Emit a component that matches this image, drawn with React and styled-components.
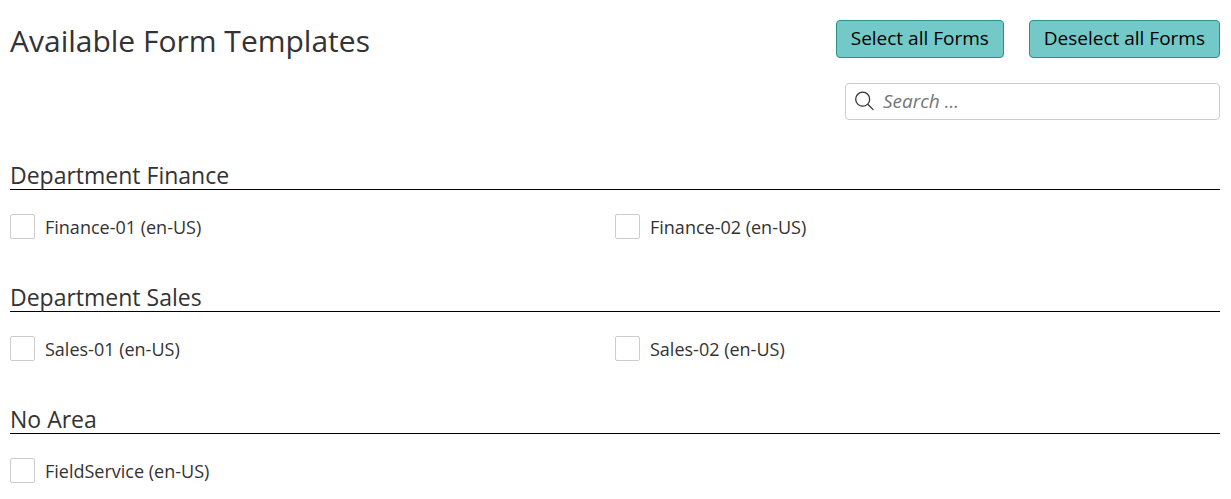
import React, { useState } from "react";
import styled, { createGlobalStyle } from "styled-components";

const GlobalStyle = createGlobalStyle`
  *, *::before, *::after { box-sizing: border-box; }
  body {
    margin: 0;
    background: #fff;
    color: #333;
    font-family: "Open Sans", "Noto Sans", sans-serif;
    font-size: 18px;
  }
`;

const Page = styled.main`
  padding: 20px 11px 16px 10px;
`;

const Header = styled.header`
  display: flex;
  justify-content: space-between;
  align-items: flex-start;
`;

const Title = styled.h1`
  margin: 0;
  font-size: 30px;
  font-weight: 400;
  line-height: 42px;
`;

const Actions = styled.div`
  display: flex;
  gap: 25px;
`;

const ActionButton = styled.button`
  height: 38px;
  padding: 0 14px 2px;
  border: 1px solid #2a9090;
  border-radius: 4px;
  background: #73c8c8;
  color: #000;
  font-family: inherit;
  font-size: 19px;
  line-height: 24px;
  cursor: pointer;
`;

const SearchRow = styled.div`
  display: flex;
  justify-content: flex-end;
  margin-top: 21px;
`;

const SearchBox = styled.label`
  display: flex;
  align-items: center;
  gap: 9px;
  width: 31%;
  height: 37px;
  padding: 0 9px 2px;
  border: 1px solid #ccc;
  border-radius: 4px;
`;

const SearchInput = styled.input`
  flex: 1;
  min-width: 0;
  padding: 0;
  border: 0;
  outline: 0;
  background: transparent;
  font-family: inherit;
  font-size: 19px;
  &::placeholder {
    color: #757575;
    font-style: italic;
    opacity: 1;
  }
`;

const Section = styled.section`
  margin-top: 42px;
`;

const SectionTitle = styled.h2`
  margin: 0 0 24px;
  border-bottom: 1px solid #000;
  font-size: 23px;
  font-weight: 400;
  line-height: 27px;
`;

const FormGrid = styled.div`
  display: grid;
  grid-template-columns: 1fr 1fr;
  padding-bottom: 2px;
`;

const Option = styled.label`
  display: flex;
  align-items: flex-start;
  gap: 10px;
  line-height: 26px;
`;

const Checkbox = styled.input`
  appearance: none;
  flex: none;
  width: 25px;
  height: 25px;
  margin: 0;
  border: 1px solid #ccc;
  border-radius: 2px;
  background: #fff;
  &:checked {
    background: #73c8c8;
  }
`;

const areas = [
  { name: "Department Finance", forms: ["Finance-01 (en-US)", "Finance-02 (en-US)"] },
  { name: "Department Sales", forms: ["Sales-01 (en-US)", "Sales-02 (en-US)"] },
  { name: "No Area", forms: ["FieldService (en-US)"] },
];

const allForms = areas.flatMap((area) => area.forms);

function SearchIcon() {
  return (
    <svg width="19" height="20" viewBox="0 0 19 20" fill="none" stroke="#333" strokeWidth="1.3" aria-hidden="true">
      <circle cx="7.7" cy="8.2" r="7" />
      <path d="M12.8 13.3L18.4 18.9" />
    </svg>
  );
}

export default function App() {
  const [selected, setSelected] = useState([]);
  const [query, setQuery] = useState("");

  const toggle = (form) =>
    setSelected((list) => (list.includes(form) ? list.filter((f) => f !== form) : [...list, form]));

  return (
    <Page>
      <GlobalStyle />
      <Header>
        <Title>Available Form Templates</Title>
        <Actions>
          <ActionButton type="button" onClick={() => setSelected(allForms)}>Select all Forms</ActionButton>
          <ActionButton type="button" onClick={() => setSelected([])}>Deselect all Forms</ActionButton>
        </Actions>
      </Header>
      <SearchRow>
        <SearchBox>
          <SearchIcon />
          <SearchInput
            type="text"
            aria-label="Search"
            placeholder="Search ..."
            value={query}
            onChange={(e) => setQuery(e.target.value)}
          />
        </SearchBox>
      </SearchRow>
      {areas.map((area) => (
        <Section key={area.name}>
          <SectionTitle>{area.name}</SectionTitle>
          <FormGrid>
            {area.forms
              .filter((form) => form.toLowerCase().includes(query.toLowerCase()))
              .map((form) => (
                <Option key={form}>
                  <Checkbox type="checkbox" checked={selected.includes(form)} onChange={() => toggle(form)} />
                  {form}
                </Option>
              ))}
          </FormGrid>
        </Section>
      ))}
    </Page>
  );
}
